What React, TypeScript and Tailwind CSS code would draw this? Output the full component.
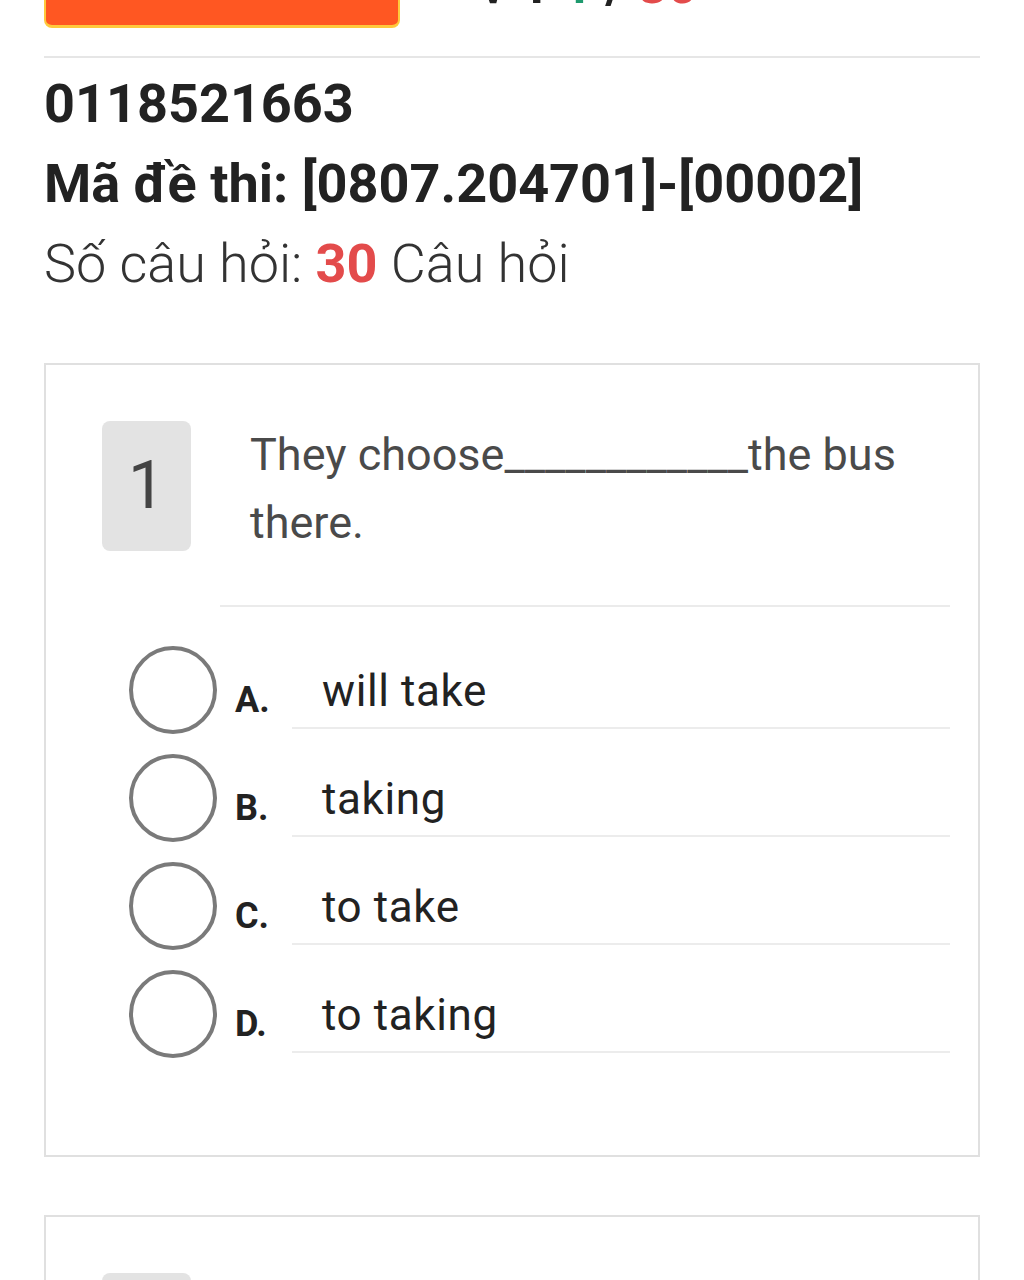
import React from "react";

const options = [
  { key: "A.", text: "will take" },
  { key: "B.", text: "taking" },
  { key: "C.", text: "to take" },
  { key: "D.", text: "to taking" },
];

function Question({ num, children, opts }: { num: number; children: React.ReactNode; opts: typeof options }) {
  return (
    <div className="border-2 border-[#e0e0e0] pt-[56px] pb-[87px]">
      <div className="flex pl-[56px]">
        <div className="w-[89px] h-[130px] shrink-0 rounded-lg bg-[#e3e3e3] flex items-center justify-center text-[66px] leading-none text-[#444]">
          {num}
        </div>
        <div className="ml-[59px] w-[700px] text-[45px] leading-[68px] text-[#4a4a4a]">{children}</div>
      </div>
      <div className="mt-[48px] ml-[174px] mr-[28px] border-t-2 border-[#ebebeb]" />
      <div className="mt-[29px] pr-[28px]">
        {opts.map((o) => (
          <div key={o.key} className="flex items-center h-[108px]">
            <div className="ml-[83px] w-[88px] h-[88px] shrink-0 rounded-full border-4 border-[#7a7a7a]" />
            <div className="w-[75px] pl-[18px] pt-[20px] text-[36px] font-bold text-[#222]">{o.key}</div>
            <div className="flex-1 h-[78px] pt-[10px] pl-[30px] border-b-2 border-[#ececec] text-[44px] leading-[60px] tracking-[0.6px] text-[#222]">
              {o.text}
            </div>
          </div>
        ))}
      </div>
    </div>
  );
}

export default function App() {
  return (
    <div className="bg-white min-h-[1280px] px-[44px] font-['Roboto','Liberation_Sans',sans-serif] overflow-hidden">
      <div className="flex items-end h-[28px]">
        <div className="w-[356px] h-[72px] shrink-0 rounded-lg bg-[#ff5722] border-b-[3px] border-x-2 border-[#ffc93c]" />
        <div className="ml-[78px] mb-[16px] text-[52px] font-bold leading-none text-[#222] whitespace-nowrap">
          √ 1 <span className="text-[#1e9a6e]">1</span> / <span className="text-[#e34b4b]">30</span>
        </div>
      </div>
      <div className="mt-[28px] border-t-2 border-[#e6e6e6]" />
      <div className="mt-[6px] text-[54px] leading-[80px] text-[#222]">
        <div className="font-bold">0118521663</div>
        <div className="font-bold">Mã đề thi: [0807.204701]-[00002]</div>
        <div className="font-light text-[#333]">
          Số câu hỏi: <span className="font-bold text-[#e34b4b]">30</span> Câu hỏi
        </div>
      </div>
      <div className="mt-[59px]">
        <Question num={1} opts={options}>
          They choose____________the bus there.
        </Question>
      </div>
      <div className="mt-[58px]">
        <Question num={2} opts={options}>
          She enjoys ____________ books in her free time.
        </Question>
      </div>
    </div>
  );
}
